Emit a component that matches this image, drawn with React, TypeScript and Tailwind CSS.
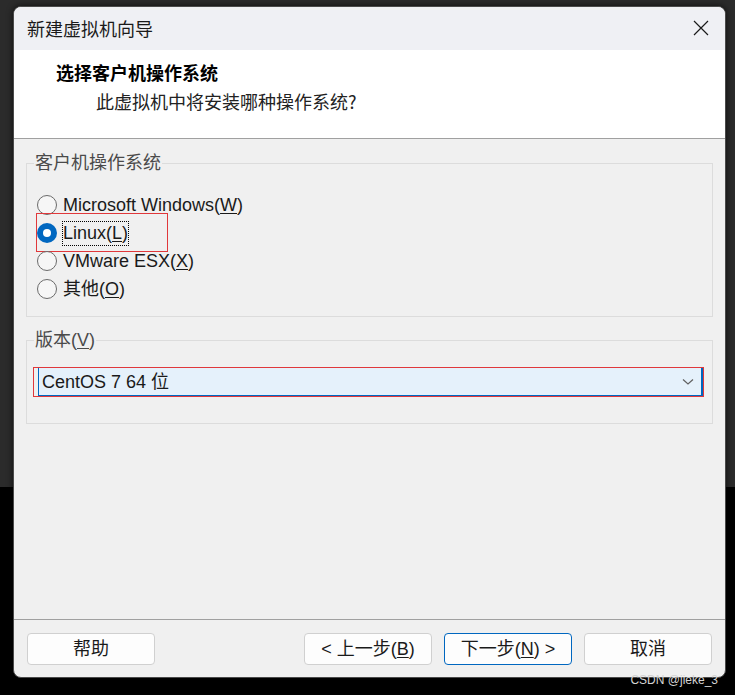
import type { ReactNode } from "react";

function Radio({ checked, focused, children }: { checked?: boolean; focused?: boolean; children: ReactNode }) {
  return (
    <div className="relative h-[28px] flex items-center">
      {checked ? (
        <span className="w-[20px] h-[20px] rounded-full bg-[#0067c0] flex items-center justify-center">
          <span className="w-[8px] h-[8px] rounded-full bg-white" />
        </span>
      ) : (
        <span className="w-[20px] h-[20px] rounded-full border border-[#6b6b6b] bg-[#f6f6f6]" />
      )}
      {focused ? (
        <span className="ml-[5px] px-0 border border-dotted border-black leading-[23px] text-[18px]">{children}</span>
      ) : (
        <span className="ml-[6px] leading-[24px] text-[18px]">{children}</span>
      )}
      {/* marca roja de la captura */}
      {checked && <div className="absolute left-[-1px] top-[-6px] w-[132px] h-[39px] border border-[#e0383b] pointer-events-none" />}
    </div>
  );
}

function Boton({ children, primary }: { children: ReactNode; primary?: boolean }) {
  return (
    <button
      className={`w-[128px] h-[32px] rounded-[4px] bg-[#fdfdfd] text-[18px] leading-none flex items-center justify-center border ${
        primary ? "border-[#0067c0]" : "border-[#d0d0d0]"
      }`}
    >
      {children}
    </button>
  );
}

export default function App() {
  return (
    <div className="relative w-[735px] h-[695px] bg-[linear-gradient(to_bottom,#2b2b2b_0px,#2b2b2b_487px,#000_487px)] pt-[6px] pl-[13px] font-['Liberation_Sans','Noto_Sans_CJK_SC',sans-serif] text-[#1a1a1a]">
      <div className="w-[713px] h-[672px] flex flex-col rounded-[8px] border border-[#4a4a4a] bg-[#f0f0f0] overflow-hidden shadow-[0_0_6px_rgba(0,0,0,0.7)]">
        {/* Barra de título */}
        <div className="h-[43px] shrink-0 bg-[#eff0f4] flex items-center justify-between pl-[13px] pr-[16px]">
          <span className="text-[18px] font-['Noto_Sans_CJK_SC',sans-serif]">新建虚拟机向导</span>
          <svg width="16" height="16" viewBox="0 0 16 16" className="-mt-[2px]">
            <path d="M1 1 L15 15 M15 1 L1 15" stroke="#1a1a1a" strokeWidth="1.2" fill="none" />
          </svg>
        </div>

        {/* Encabezado */}
        <div className="h-[89px] shrink-0 bg-white border-b border-[#a0a0a0] pt-[10px] font-['Noto_Sans_CJK_SC',sans-serif]">
          <div className="pl-[42px] text-[18px] leading-[24px] font-bold text-black">选择客户机操作系统</div>
          <div className="pl-[82px] mt-[5px] text-[18px] leading-[24px] text-[#222]">此虚拟机中将安装哪种操作系统?</div>
        </div>

        {/* Cuerpo */}
        <div className="flex-1 flex flex-col pt-[12px] px-[12px]">
          <fieldset className="border border-[#dcdcdc] pl-[10px] pt-[16px] pb-[13px]">
            <legend className="ml-[-3px] px-[1px] text-[18px] leading-[24px] text-[#4a4a4a]">客户机操作系统</legend>
            <Radio>
              Microsoft Windows(<span className="underline underline-offset-2">W</span>)
            </Radio>
            <Radio checked focused>
              Linux(<span className="underline underline-offset-2">L</span>)
            </Radio>
            <Radio>
              VMware ESX(<span className="underline underline-offset-2">X</span>)
            </Radio>
            <Radio>
              其他(<span className="underline underline-offset-2">O</span>)
            </Radio>
          </fieldset>

          <fieldset className="mt-[11px] border border-[#dcdcdc] pl-[6px] pr-[8px] pt-[15px] pb-[26px]">
            <legend className="ml-[1px] px-[1px] text-[18px] leading-[24px] text-[#4a4a4a]">
              版本(<span className="underline underline-offset-2">V</span>)
            </legend>
            <div className="h-[30px] border border-[#e0383b] pl-[4px]">
              <div className="h-full bg-[#e5f1fb] border-l border-r-2 border-b border-[#0067c0] flex items-center justify-between pl-[3px] pr-[7px]">
                <span className="text-[18px] leading-none">CentOS 7 64 位</span>
                <svg width="12" height="8" viewBox="0 0 12 8">
                  <path d="M1 1.5 L6 6 L11 1.5" stroke="#606060" strokeWidth="1.2" fill="none" />
                </svg>
              </div>
            </div>
          </fieldset>
        </div>

        {/* Pie */}
        <div className="shrink-0 border-t border-[#a0a0a0] pt-[13px] pb-[12px] px-[13px] flex items-center">
          <Boton>帮助</Boton>
          <div className="flex-1" />
          <div className="flex gap-[12px]">
            <Boton>
              &lt; 上一步(<span className="underline underline-offset-2">B</span>)
            </Boton>
            <Boton primary>
              下一步(<span className="underline underline-offset-2">N</span>) &gt;
            </Boton>
            <Boton>取消</Boton>
          </div>
        </div>
      </div>

      <span className="absolute right-[17px] top-[673px] text-[12px] leading-[14px] text-[#d4d4d4]">CSDN @jieke_3</span>
    </div>
  );
}
